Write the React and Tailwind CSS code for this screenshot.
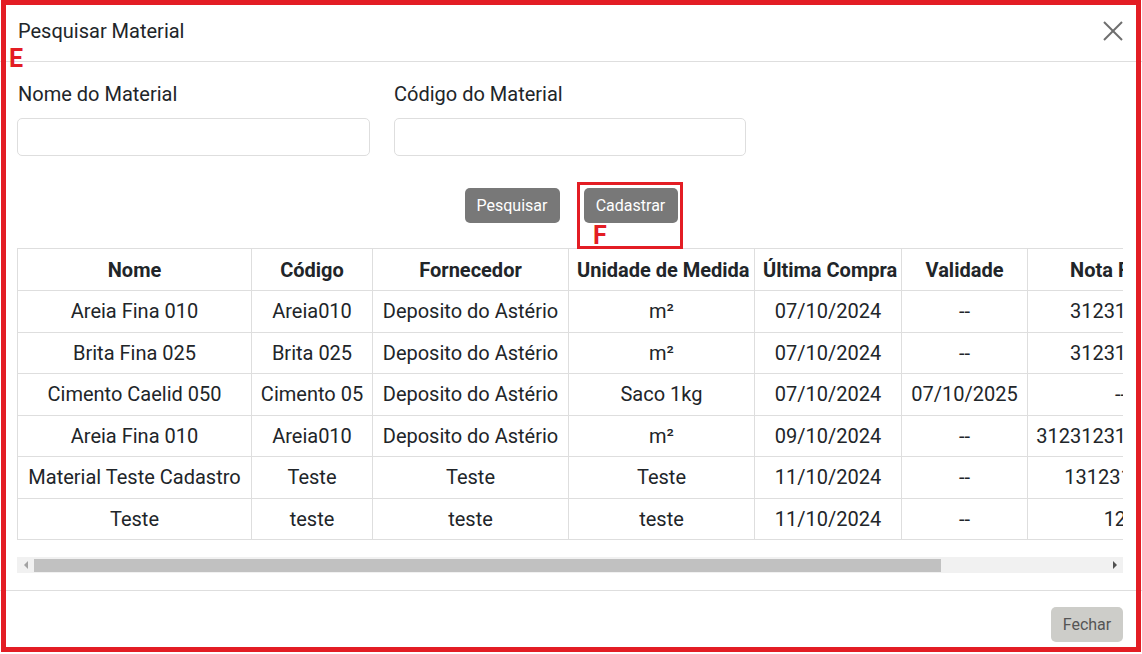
import { useState } from 'react';

const rows = [
    { nome: 'Areia Fina 010', codigo: 'Areia010', fornecedor: 'Deposito do Astério', unidade: 'm²', compra: '07/10/2024', validade: '--', nota: '312312312', qtd: '10' },
    { nome: 'Brita Fina 025', codigo: 'Brita 025', fornecedor: 'Deposito do Astério', unidade: 'm²', compra: '07/10/2024', validade: '--', nota: '312312312', qtd: '5' },
    { nome: 'Cimento Caelid 050', codigo: 'Cimento 05', fornecedor: 'Deposito do Astério', unidade: 'Saco 1kg', compra: '07/10/2024', validade: '07/10/2025', nota: '--', qtd: '20' },
    { nome: 'Areia Fina 010', codigo: 'Areia010', fornecedor: 'Deposito do Astério', unidade: 'm²', compra: '09/10/2024', validade: '--', nota: '312312312312312', qtd: '8' },
    { nome: 'Material Teste Cadastro', codigo: 'Teste', fornecedor: 'Teste', unidade: 'Teste', compra: '11/10/2024', validade: '--', nota: '1312312312', qtd: '1' },
    { nome: 'Teste', codigo: 'teste', fornecedor: 'teste', unidade: 'teste', compra: '11/10/2024', validade: '--', nota: '123', qtd: '1' },
];

const cell = 'border border-[#dedede] px-2 whitespace-nowrap overflow-hidden text-center';

export default function App() {
    const [nome, setNome] = useState('');
    const [codigo, setCodigo] = useState('');

    return (
        <div className="relative w-[1142px] h-[654px] bg-white overflow-hidden font-['Roboto',sans-serif] text-[#212529]">
            {/* header */}
            <div className="h-[62px] flex items-center justify-between px-[18px] border-b border-[#dedede]">
                <h1 className="text-[20px]">Pesquisar Material</h1>
                <button className="w-[22px] h-[22px] flex items-center justify-center">
                    <svg width="22" height="22" viewBox="0 0 22 22" stroke="#6e6e6e" strokeWidth="2">
                        <line x1="2" y1="2" x2="20" y2="20" />
                        <line x1="20" y1="2" x2="2" y2="20" />
                    </svg>
                </button>
            </div>

            {/* body */}
            <div className="px-[17px] pt-[20px]">
                <div className="flex gap-6">
                    <div className="w-[353px]">
                        <label className="block text-[20px] leading-[24px] pl-px mb-3">Nome do Material</label>
                        <input
                            value={nome}
                            onChange={e => setNome(e.target.value)}
                            className="w-full h-[38px] border border-[#dedede] rounded-[5px] px-3 outline-none"
                        />
                    </div>
                    <div className="w-[352px]">
                        <label className="block text-[20px] leading-[24px] mb-3">Código do Material</label>
                        <input
                            value={codigo}
                            onChange={e => setCodigo(e.target.value)}
                            className="w-full h-[38px] border border-[#dedede] rounded-[5px] px-3 outline-none"
                        />
                    </div>
                </div>

                <div className="flex justify-center gap-6 mt-8">
                    <button className="w-[95px] h-[35px] bg-[#787878] text-white text-[16px] rounded-[5px]">Pesquisar</button>
                    <button className="w-[94px] h-[35px] bg-[#787878] text-white text-[16px] rounded-[5px]">Cadastrar</button>
                </div>

                <div className="w-[1106px] overflow-hidden mt-[25px]">
                    <table className="table-fixed border-collapse w-[1306px] text-[20px]">
                        <thead>
                            <tr className="h-[42px]">
                                <th className={`${cell} w-[234px] font-bold`}>Nome</th>
                                <th className={`${cell} w-[121px] font-bold`}>Código</th>
                                <th className={`${cell} w-[196px] font-bold`}>Fornecedor</th>
                                <th className={`${cell} w-[186px] font-bold`}>Unidade de Medida</th>
                                <th className={`${cell} w-[147px] font-bold`}>Última Compra</th>
                                <th className={`${cell} w-[126px] font-bold`}>Validade</th>
                                <th className={`${cell} w-[186px] font-bold`}>Nota Fiscal</th>
                                <th className={`${cell} w-[110px] font-bold`}>Qtd.</th>
                            </tr>
                        </thead>
                        <tbody>
                            {rows.map((r, i) => (
                                <tr key={i} className="h-[41.5px]">
                                    <td className={cell}>{r.nome}</td>
                                    <td className={cell}>{r.codigo}</td>
                                    <td className={cell}>{r.fornecedor}</td>
                                    <td className={cell}>{r.unidade}</td>
                                    <td className={cell}>{r.compra}</td>
                                    <td className={cell}>{r.validade}</td>
                                    <td className={cell}>{r.nota}</td>
                                    <td className={cell}>{r.qtd}</td>
                                </tr>
                            ))}
                        </tbody>
                    </table>
                </div>

                {/* scrollbar */}
                <div className="mt-[17px] w-[1106px] h-[16px] bg-[#f1f1f1] flex items-center">
                    <div className="w-[17px] h-full flex items-center justify-center">
                        <svg width="6" height="8" viewBox="0 0 6 8"><path d="M5 0 L1 4 L5 8 Z" fill="#a3a3a3" /></svg>
                    </div>
                    <div className="w-[907px] h-[13px] bg-[#c1c1c1]" />
                    <div className="flex-1" />
                    <div className="w-[17px] h-full flex items-center justify-center">
                        <svg width="6" height="8" viewBox="0 0 6 8"><path d="M1 0 L5 4 L1 8 Z" fill="#505050" /></svg>
                    </div>
                </div>
            </div>

            {/* footer */}
            <div className="mt-[17px] border-t border-[#dedede] flex justify-end px-[19px] pt-[16px]">
                <button className="w-[72px] h-[35px] bg-[#cdcdc9] text-[#555] text-[16px] rounded-[5px]">Fechar</button>
            </div>

            {/* annotations */}
            <div className="absolute left-px top-0 w-[1140px] h-[652px] border-[5px] border-[#e31d24] pointer-events-none" />
            <div className="absolute left-[9px] top-[44px] text-[#e31d24] font-bold text-[25px] leading-[30px] pointer-events-none">E</div>
            <div className="absolute left-[577px] top-[182px] w-[106px] h-[67px] border-[3px] border-[#e31d24] pointer-events-none" />
            <div className="absolute left-[593px] top-[221px] text-[#e31d24] font-bold text-[25px] leading-[30px] pointer-events-none">F</div>
        </div>
    );
}
